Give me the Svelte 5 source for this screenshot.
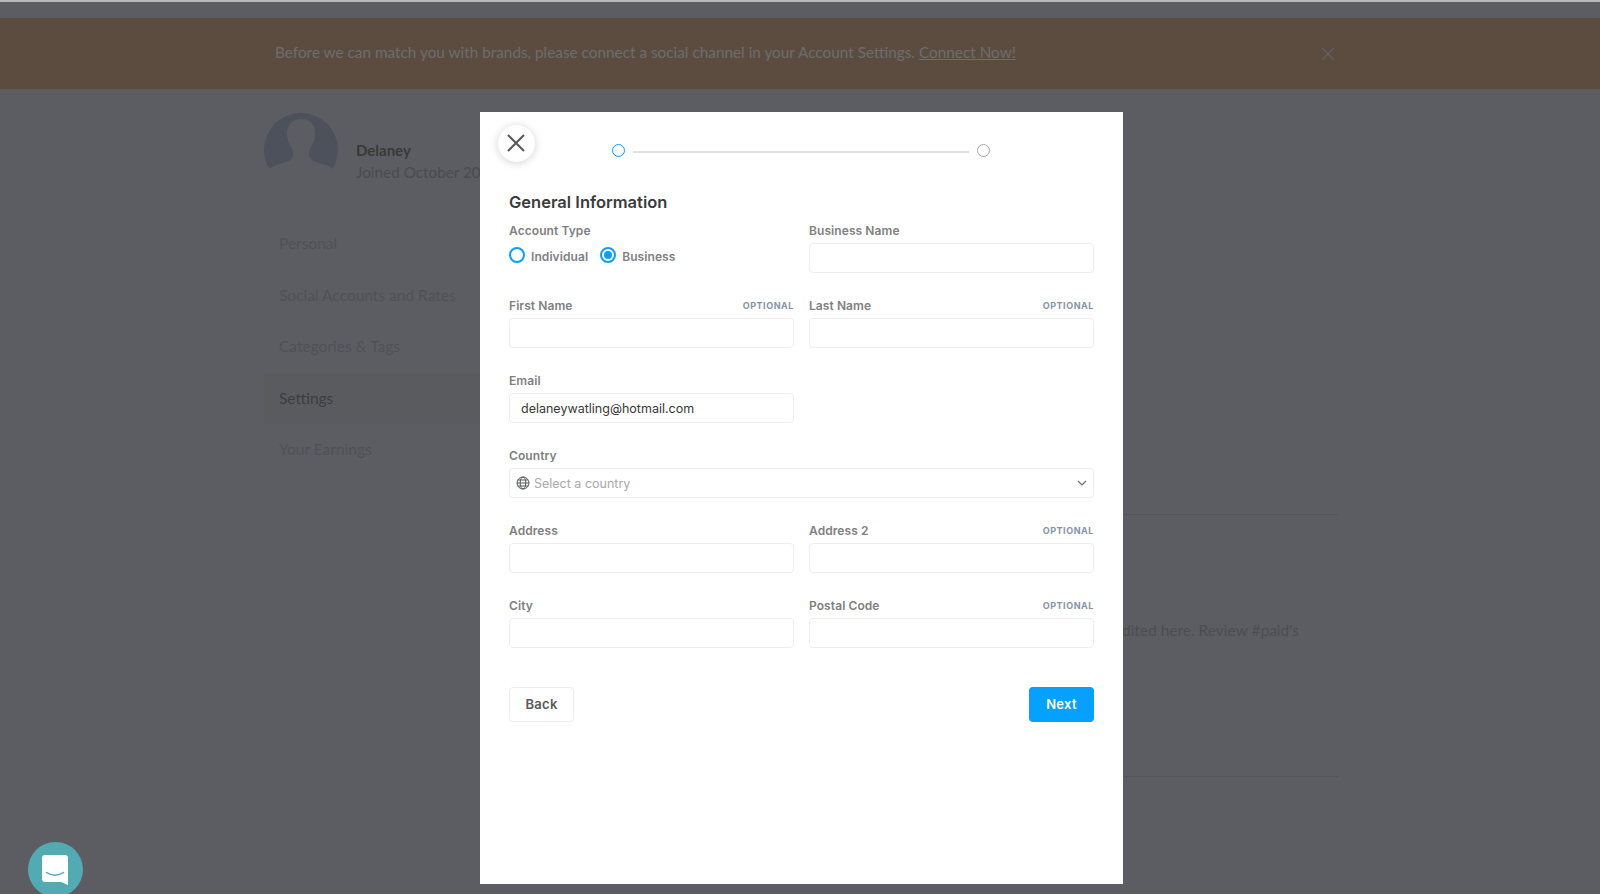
<script>
  const nav = ['Personal', 'Social Accounts and Rates', 'Categories & Tags', 'Settings', 'Your Earnings'];
</script>

<div class="page">
  <div class="topline"></div>
  <div class="banner">
    <p>Before we can match you with brands, please connect a social channel in your Account Settings. <u>Connect Now!</u></p>
    <svg class="banner-x" width="14" height="14" viewBox="0 0 14 14" aria-hidden="true"><path d="M1 1l12 12M13 1L1 13" /></svg>
  </div>

  <div class="content">
    <aside class="side">
      <div class="profile">
        <svg class="avatar" width="74" height="74" viewBox="0 0 74 74" aria-hidden="true">
          <circle cx="37" cy="37" r="37" fill="#4c515c" />
          <path fill="#5c5d62" d="M37 6c-11 0-15 8-14 17 1 8 6 12 6 18 0 4-2 6-7 8-6 2-12 3-17 7v18h64V56c-5-4-11-5-17-7-5-2-7-4-7-8 0-6 5-10 6-18 1-9-3-17-14-17z" />
        </svg>
        <div class="who">
          <strong>Delaney</strong>
          <span>Joined October 2020</span>
        </div>
      </div>
      <nav>
        {#each nav as item}
          <div class="nav-item" class:active={item === 'Settings'}>{item}</div>
        {/each}
      </nav>
    </aside>
    <main class="main">
      <hr class="rule first" />
      <p class="note">edited here. Review #paid's</p>
      <hr class="rule second" />
    </main>
  </div>

  <button class="chat" aria-label="Open chat">
    <svg width="26" height="30" viewBox="0 0 26 30" aria-hidden="true">
      <path fill="#fff" d="M3 0h20a3 3 0 0 1 3 3v27l-7-3H3a3 3 0 0 1-3-3V3a3 3 0 0 1 3-3z" />
      <path d="M4.500 17.500c5 3.500 12 3.500 17 0" fill="none" stroke="#52aab3" stroke-width="1.500" stroke-linecap="round" />
    </svg>
  </button>

  <section class="modal">
    <button class="close" aria-label="Close">
      <svg width="20" height="20" viewBox="0 0 20 20" aria-hidden="true"><path d="M2 2l16 16M18 2L2 18" /></svg>
    </button>

    <div class="stepper">
      <span class="step current"></span>
      <span class="track"></span>
      <span class="step"></span>
    </div>

    <h2>General Information</h2>

    <div class="form">
      <div class="field">
        <div class="label"><span>Account Type</span></div>
        <div class="radios">
          <span class="radio"></span><span class="radio-text">Individual</span>
          <span class="radio on"></span><span class="radio-text">Business</span>
        </div>
      </div>
      <div class="field">
        <div class="label"><span>Business Name</span></div>
        <input class="input" type="text" />
      </div>

      <div class="field">
        <div class="label"><span>First Name</span><em>OPTIONAL</em></div>
        <input class="input" type="text" />
      </div>
      <div class="field">
        <div class="label"><span>Last Name</span><em>OPTIONAL</em></div>
        <input class="input" type="text" />
      </div>

      <div class="field">
        <div class="label"><span>Email</span></div>
        <div class="input value">delaneywatling@hotmail.com</div>
      </div>
      <div></div>

      <div class="field wide">
        <div class="label"><span>Country</span></div>
        <div class="input select">
          <svg class="globe" width="14" height="14" viewBox="0 0 14 14" aria-hidden="true">
            <circle cx="7" cy="7" r="6" />
            <ellipse cx="7" cy="7" rx="2.800" ry="6" />
            <path d="M1 7h12M1.800 4h10.400M1.800 10h10.400" />
          </svg>
          <span class="placeholder">Select a country</span>
          <svg class="chev" width="10" height="6" viewBox="0 0 10 6" aria-hidden="true"><path d="M1 1l4 4 4-4" /></svg>
        </div>
      </div>

      <div class="field">
        <div class="label"><span>Address</span></div>
        <input class="input" type="text" />
      </div>
      <div class="field">
        <div class="label"><span>Address 2</span><em>OPTIONAL</em></div>
        <input class="input" type="text" />
      </div>

      <div class="field">
        <div class="label"><span>City</span></div>
        <input class="input" type="text" />
      </div>
      <div class="field">
        <div class="label"><span>Postal Code</span><em>OPTIONAL</em></div>
        <input class="input" type="text" />
      </div>
    </div>

    <div class="actions">
      <button class="btn back">Back</button>
      <button class="btn next">Next</button>
    </div>
  </section>
</div>

<style>
  :global(body) {
    margin: 0;
    background: #5c5d62;
  }
  .page {
    position: relative;
    width: 1600px;
    height: 894px;
    overflow: hidden;
    background: #5c5d62;
    font-family: Lato, "Open Sans", sans-serif;
  }
  .topline {
    height: 2px;
    margin-bottom: 16px;
    background: #b9b9bb;
  }
  .banner {
    height: 71px;
    box-sizing: border-box;
    padding: 0 265px 0 275px;
    display: flex;
    align-items: center;
    justify-content: space-between;
    background: #5c4c40;
    color: #6d6c70;
    font-size: 15.340px;
  }
  .banner p {
    margin: 0 0 4px;
  }
  .banner-x path {
    fill: none;
    stroke: #5f6068;
    stroke-width: 1.500;
  }
  .content {
    display: flex;
    padding: 24px 262px 0 264px;
  }
  .side {
    width: 216px;
    flex: none;
  }
  .profile {
    display: flex;
    align-items: flex-start;
    gap: 18px;
    height: 74px;
    white-space: nowrap;
  }
  .avatar {
    flex: none;
  }
  .who {
    display: flex;
    flex-direction: column;
    gap: 2px;
    margin-top: 27px;
    font-size: 15.300px;
    color: #4a4b4f;
    line-height: 20px;
  }
  .who strong {
    color: #38393d;
    font-weight: 700;
    font-size: 15px;
  }
  nav {
    margin-top: 31px;
  }
  .nav-item {
    height: 51.500px;
    line-height: 51.500px;
    padding-left: 15px;
    font-size: 15.500px;
    color: #505156;
    white-space: nowrap;
  }
  .active {
    background: #5a5b5f;
    color: #3c3d42;
  }
  .main {
    flex: 1;
    position: relative;
  }
  .rule {
    margin: 0;
    border: 0;
    height: 1px;
    background: #55565a;
  }
  .first {
    margin-top: 401px;
  }
  .note {
    margin: 105px 39px 0 0;
    text-align: right;
    font-size: 15.500px;
    line-height: 20px;
    color: #4c4d51;
  }
  .second {
    margin-top: 136px;
  }
  .chat {
    position: absolute;
    left: 27.500px;
    top: 842px;
    width: 55px;
    height: 55px;
    padding: 0;
    border: 0;
    border-radius: 50%;
    background: #52aab3;
    display: flex;
    align-items: center;
    justify-content: center;
  }
  .modal {
    position: absolute;
    left: 479.500px;
    top: 112px;
    width: 643.500px;
    height: 772px;
    box-sizing: border-box;
    padding: 32px 29px 0 29.500px;
    background: #fff;
    font-family: Inter, "Liberation Sans", sans-serif;
  }
  .close {
    position: absolute;
    left: 18px;
    top: 12.500px;
    width: 37px;
    height: 37px;
    padding: 0;
    border: 0;
    border-radius: 50%;
    background: #fff;
    box-shadow: 0 1px 8px rgba(0, 0, 0, 0.18);
    display: flex;
    align-items: center;
    justify-content: center;
  }
  .close path {
    fill: none;
    stroke: #555659;
    stroke-width: 2;
  }
  .stepper {
    display: flex;
    align-items: center;
    gap: 7.500px;
    padding: 0 104px 0 103px;
  }
  .step {
    flex: none;
    width: 13px;
    height: 13px;
    box-sizing: border-box;
    border: 1.500px solid #a9a9a9;
    border-radius: 50%;
  }
  .current {
    border-color: #0a9fff;
  }
  .track {
    flex: 1;
    height: 2px;
    margin-top: 2px;
    margin-right: 1px;
    background: #e0e0e0;
  }
  h2 {
    margin: 33px 0 9px;
    font-size: 16.500px;
    line-height: 24px;
    font-weight: 600;
    color: #3b3b3d;
  }
  .form {
    display: grid;
    grid-template-columns: 285px 285px;
    column-gap: 15px;
    row-gap: 25px;
  }
  .wide {
    grid-column: 1 / -1;
  }
  .label {
    display: flex;
    justify-content: space-between;
    align-items: center;
    height: 15px;
    margin-bottom: 5px;
    font-size: 12px;
    font-weight: 600;
    letter-spacing: 0.08px;
    color: #808082;
  }
  .label em {
    font-style: normal;
    font-size: 9px;
    font-weight: 700;
    letter-spacing: 0.55px;
    color: #8494a6;
  }
  .input {
    display: block;
    width: 100%;
    height: 30px;
    box-sizing: border-box;
    margin: 0;
    padding: 0 11px;
    border: 1px solid #eeeef0;
    border-radius: 4px;
    background: #fff;
    outline: none;
  }
  .value {
    line-height: 29px;
    font-size: 12.500px;
    color: #38383a;
  }
  .select {
    display: flex;
    align-items: center;
    padding: 0 6px;
  }
  .globe {
    flex: none;
    margin-right: 4px;
  }
  .globe circle,
  .globe ellipse,
  .globe path {
    fill: none;
    stroke: #555659;
    stroke-width: 1;
  }
  .placeholder {
    flex: 1;
    font-size: 12.500px;
    color: #a9a9ab;
  }
  .chev path {
    fill: none;
    stroke: #6d6d70;
    stroke-width: 1.200;
  }
  .radios {
    display: flex;
    align-items: center;
    height: 30px;
    font-size: 12px;
    font-weight: 600;
    letter-spacing: 0.08px;
    color: #808082;
  }
  .radio {
    flex: none;
    width: 16px;
    height: 16px;
    box-sizing: border-box;
    border: 2px solid #0a9fff;
    border-radius: 50%;
    margin-right: 6px;
    margin-top: -6px;
    position: relative;
  }
  .radio.on::after {
    content: "";
    position: absolute;
    inset: 2px;
    border-radius: 50%;
    background: #0a9fff;
  }
  .radio-text {
    margin-right: 12px;
    margin-top: -4px;
  }
  .actions {
    display: flex;
    justify-content: space-between;
    margin-top: 39px;
  }
  .btn {
    height: 35px;
    box-sizing: border-box;
    border-radius: 4px;
    padding: 0 0 1px;
    font-family: inherit;
    font-size: 13px;
    font-weight: 600;
    letter-spacing: 0.3px;
  }
  .back {
    width: 65px;
    border: 1px solid #eeeef0;
    background: #fff;
    color: #58585b;
  }
  .next {
    width: 65px;
    border: 0;
    background: #06a0ff;
    color: #fff;
  }
</style>
